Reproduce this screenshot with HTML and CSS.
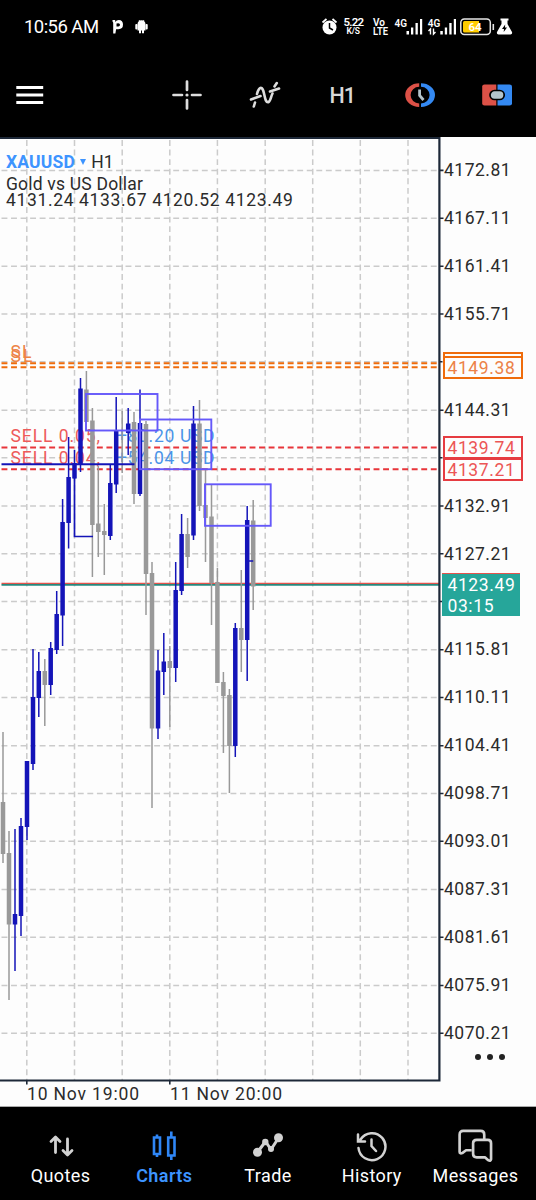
FILE: index.html
```html
<!DOCTYPE html>
<html lang="en">
<head>
<meta charset="utf-8">
<title>XAUUSD H1</title>
<link rel="stylesheet" href="styles.css">
</head>
<body>
<div class="app">
  <header class="status">
    <span class="clock">10:56 AM</span>
    <svg class="notif" width="37" height="16" viewBox="0 0 37 16" fill="#fff">
      <path d="M0.5 1H3.2V3Q4.5 1 6.8 1Q11 1.200 11 5.600Q11 10.200 6.500 10.200H4.100L3.400 14.500H1.200V4Q1.200 3 0.500 2.500ZM4.500 4.500V7.500H6.300Q8 7.400 8 5.800Q8 4.200 6.300 4.200Z" fill-rule="evenodd"/>
      <path d="M25.500 5.500Q25.500 1.500 29.500 1.300Q33.500 1.500 33.500 5.500V11.500H25.500ZM27 11H29V14.300H27ZM30 11H32V14.300H30Z"/>
      <rect x="23.300" y="5" width="2.200" height="5.500" rx="0.900"/><rect x="33.500" y="5" width="2.200" height="5.500" rx="0.900"/>
      <path d="M27 1L28 2.500M32 1L31 2.500" stroke="#fff" stroke-width="0.800"/>
    </svg>
    <svg class="system" width="196" height="24" viewBox="320 15 196 24">
      <g fill="#fff">
        <circle cx="329.500" cy="27.500" r="7"/>
        <path d="M322.500 22.500L326.500 19M336.500 22.500L332.500 19" stroke="#fff" stroke-width="1.800"/>
        <path d="M329.500 23V28L333 30" fill="none" stroke="#000" stroke-width="1.500"/>
        <text x="343.500" y="25.500" class="s11" textLength="20.500">5.22</text>
        <text x="346.500" y="34" class="s8" textLength="13.500">K/S</text>
        <text x="373" y="26" class="s10" textLength="12">Vo</text>
        <text x="373" y="34.700" class="s10" textLength="15" lengthAdjust="spacingAndGlyphs">LTE</text>
        <text x="394.500" y="26.800" class="s10" textLength="12.500">4G</text>
        <text x="427.800" y="26.500" class="s10" textLength="12.500">4G</text>
        <path d="M406.500 31H409V34.500H406.500ZM411 27.500H413.300V34.500H411ZM415.500 23H417.800V34.500H415.500ZM420 19H422.200V34.500H420Z"/>
        <path d="M440.300 31H442.800V34.500H440.300ZM444.800 27.500H447.100V34.500H444.800ZM449.300 23H451.600V34.500H449.300ZM453.800 19H456V34.500H453.800Z"/>
        <path d="M430.500 34.500V29L428.500 31M433.500 28.500V34L435.500 32" fill="none" stroke="#fff" stroke-width="1.400"/>
        <rect x="460.800" y="19" width="29.500" height="15.500" rx="3.500" fill="none" stroke="#e6e6e6" stroke-width="1.500"/>
        <path d="M464.500 21H479V32.500H464.500Q463 32.500 463 31V22.500Q463 21 464.500 21Z" fill="#fc0"/>
        <path d="M493.300 24V30" stroke="#e6e6e6" stroke-width="1.600"/>
        <text x="468.500" y="31" class="s11" textLength="13">64</text>
        <path d="M500.500 18.500H508.500V20.500H507.500V24L512 32Q512.600 34.300 510.500 34.500H498.500Q496.400 34.300 497 32L501.500 24V20.500H500.500Z"/>
        <path d="M505.200 24.500L502 29H504L503.700 32L507 27.500H505Z" fill="#000"/>
      </g>
    </svg>
  </header>

  <nav class="toolbar">
    <svg class="menu" width="28" height="20" viewBox="0 0 28 20"><path d="M0.300 2.500H27.200M0.300 10H27.200M0.300 17.500H27.200" stroke="#fff" stroke-width="3"/></svg>
    <div class="tools">
      <svg width="30" height="30" viewBox="0 0 30 30"><path d="M15 1.500V10M15 20V28.500M1.500 15H10M20 15H28.500" stroke="#ddd" stroke-width="2.700" stroke-linecap="round"/><circle cx="15" cy="15" r="1.600" fill="#ddd"/></svg>
      <svg width="34" height="30" viewBox="0 0 34 30" fill="none" stroke="#ddd" stroke-width="2.600" stroke-linecap="round"><path d="M3 19.500L12.500 16M22 11.500L31 8.500M5.800 26.500L7 22.500M9 14C10.500 7.500 13.500 5.800 15.200 10.500C17 16 17 22.500 20.200 22.200C22.500 21.500 22.700 17 24.500 13.500M26.500 6.500L28.800 3"/></svg>
      <span class="period">H1</span>
      <svg width="30" height="28" viewBox="0 0 30 28"><path d="M14.200 2.200V5.800A8.600 8.300 0 0 0 14.200 22.400V26A14 11.900 0 0 1 14.200 2.200Z" fill="#dc5147"/><path d="M16 2.200V5.800A8.600 8.300 0 0 1 16 22.400V26A14 11.900 0 0 0 16 2.200Z" fill="#3489f2"/><path d="M14.600 8.500V14.500L18.500 19" fill="none" stroke="#b4c4cb" stroke-width="2.800"/></svg>
      <svg width="30" height="22" viewBox="0 0 30 22"><path d="M2.500 0.500H14.300V21.500H2.500Q0.200 21.500 0.200 19.500V2.500Q0.200 0.500 2.500 0.500Z" fill="#dc5147"/><path d="M15.500 0.500H27.500Q30 0.500 30 2.500V19.500Q30 21.500 27.500 21.500H15.500Z" fill="#3489f2"/><rect x="8" y="6.500" width="14.200" height="9" rx="4.500" fill="#b4c4cb" stroke="#000" stroke-width="1.700"/></svg>
    </div>
  </nav>

  <main class="chart">
    <svg class="plot" width="444" height="970" viewBox="0 137 444 970">
      <g class="grid">
        <path stroke-dasharray="5.900 3.640" d="M1.500 170.400H438M1.500 218.200H438M1.500 266.200H438M1.500 314H438M1.500 361.800H438M1.500 410.200H438M1.500 457.800H438M1.500 506H438M1.500 553.800H438M1.500 601.500H438M1.500 649.700H438M1.500 697.500H438M1.500 745.700H438M1.500 793.500H438M1.500 841.200H438M1.500 889.500H438M1.500 937.200H438M1.500 985.500H438M1.500 1033.300H438"/>
        <path stroke-dasharray="5.900 3.680" d="M26.800 140V1080M74.500 140V1080M122.200 140V1080M169.800 140V1080M217.400 140V1080M265.200 140V1080M312.700 140V1080M360.300 140V1080M408 140V1080"/>
      </g>
      <path d="M1.500 583.500H439" stroke="#e5534d" stroke-width="1.400"/>
      <path d="M1.500 584.900H439" stroke="#26897f" stroke-width="1.600"/>
      <g class="sl"><text x="10.500" y="357.500" textLength="21">SL</text><text x="10.500" y="361.500" textLength="22">SL</text></g>
      <path d="M1.500 363.300H438M1.500 367.300H438" stroke="#ef6c0c" stroke-width="2" stroke-dasharray="5.900 3.640"/>
      <path d="M1.500 447.500H438M1.500 469.200H438" stroke="#e8353a" stroke-width="1.900" stroke-dasharray="5.900 3.640"/>
      <g class="order">
        <text x="10.500" y="442" textLength="89.500">SELL 0.05,</text>
        <text x="10.500" y="463.500" textLength="89.500">SELL 0.04,</text>
        <g class="profit"><text x="117" y="442" textLength="97.500">+80.20 USD</text><text x="117" y="463.500" textLength="97.500">+54.04 USD</text></g>
      </g>
      <g class="down">
        <path class="wick" d="M3 732V863M9 831V1000M44.800 659V726M86.400 371V422M92.400 408V577M98.300 466V557M104.300 504V575M122.200 411V473M134 412V504M146 421V615M152 562V808M169.800 646V727M187.600 518V568M199.500 400V511M205.500 470V562M211.500 485V625M217.400 568V683M223.400 672V753M229.400 689V793M241.300 570V672M253.200 500V610"/>
        <path class="body" d="M3 802V854M9 853V924.500M44.800 671V685M86.400 389.500V422M92.400 420.500V525M98.300 523.500V532M104.300 531V535M134 422V494M146 424V574M152 573V728.500M169.800 661V668M187.600 534V557M199.500 423.500V506M205.500 505V518M211.500 516.500V583M217.400 582V683M223.400 682V696M229.400 695V746M241.300 628V640M253.200 520.500V586.500"/>
      </g>
      <g class="up">
        <path class="wick" d="M15 829V971M21 818V936M27 761V840M33 649V770M38.800 652V717M50.700 642V695M56.700 591V654M62.600 499V646M68.600 437V548.500M74.500 450V479M80.500 378V472M110.300 465V540M116.200 397V493M128.200 408V455M140 389.500V496M158 650V739M163.800 633V695M175.700 562V682M181.600 514V595M193.500 406V540M235.300 623V757M247.200 506V681"/>
        <path class="body" d="M15 914V924.500M21 826V916M27 761V827M33 697V764M38.800 671V698M50.700 648V685M56.700 614V650M62.600 522V615.500M68.600 477V523M74.500 463V478.500M80.500 388.500V464M110.300 483V536M116.200 431V484.500M128.200 423.500V433M140 423V494M158 670.500V728.500M163.800 661.500V672M175.700 590V668M181.600 534V591M193.500 423.500V535.500M235.300 628V746M247.200 520V640"/>
        <path d="M74.500 464V536.500H93M247 561H253.200" fill="none" stroke-width="1.700"/>
        <path d="M1.500 464.200H134.500" stroke-width="2"/>
      </g>
      <g class="zones"><rect x="86" y="394" width="71.500" height="36.500"/><rect x="140" y="419.500" width="71.300" height="49.700"/><rect x="205" y="484.300" width="65.700" height="41.500"/></g>
      <g class="frame">
        <path d="M0 138H439.400V1080.500H0" stroke-width="2.200"/>
        <path stroke-width="1.600" d="M440 170.400H443.500M440 218.200H443.500M440 266.200H443.500M440 314H443.500M440 361.800H442.500M440 410.200H443.500M440 457.800H442.500M440 506H443.500M440 553.800H443.500M440 601.500H442.500M440 649.700H443.500M440 697.500H443.500M440 745.700H443.500M440 793.500H443.500M440 841.200H443.500M440 889.500H443.500M440 937.200H443.500M440 985.500H443.500M440 1033.300H443.500M26.800 1081V1084.500M169.800 1081V1084.500"/>
      </g>
      <g class="time"><text x="27" y="1100" textLength="112">10 Nov 19:00</text><text x="170" y="1100" textLength="112">11 Nov 20:00</text></g>
    </svg>
    <div class="prices">
      <span>4172.81</span><span>4167.11</span><span>4161.41</span><span>4155.71</span><span></span><span>4144.31</span><span></span><span>4132.91</span><span>4127.21</span><span></span><span>4115.81</span><span>4110.11</span><span>4104.41</span><span>4098.71</span><span>4093.01</span><span>4087.31</span><span>4081.61</span><span>4075.91</span><span>4070.21</span>
    </div>
    <div class="tag stop back"></div>
    <div class="tag stop">4149.38</div>
    <div class="tag sell first">4139.74</div>
    <div class="tag sell second">4137.21</div>
    <div class="tag now">4123.49<br>03:15</div>
    <div class="heading">
      <div class="symbol"><b>XAUUSD</b><i></i><span>H1</span></div>
      <div class="name">Gold vs US Dollar</div>
      <div class="ohlc">4131.24 4133.67 4120.52 4123.49</div>
    </div>
    <svg class="more" width="32" height="8" viewBox="0 0 32 8" fill="#222"><circle cx="4" cy="4" r="3"/><circle cx="16" cy="4" r="3"/><circle cx="28" cy="4" r="3"/></svg>
  </main>

  <nav class="tabs">
    <a class="tab"><svg width="26" height="34" viewBox="0 0 26 34" fill="none" stroke="#d2d2d2" stroke-width="2.800" stroke-linecap="round" stroke-linejoin="round"><path d="M7.500 23.500V8.500M3 12.500L7.500 8L12 12.500M19.500 10V25M15 21.500L19.500 26L24 21.500"/></svg><span>Quotes</span></a>
    <a class="tab active"><svg width="26" height="34" viewBox="0 0 26 34" fill="none" stroke="#2f86f6" stroke-width="2.600"><path d="M3 8.500H9V25H3ZM6 5.500V8.500M6 25V28M17.200 8.500H23.500V26.500H17.200ZM20.300 2.500V8.500M20.300 26.500V31"/></svg><span>Charts</span></a>
    <a class="tab"><svg width="32" height="34" viewBox="0 0 32 34" fill="#d2d2d2"><path d="M6 22.500L13.500 12.500L19 20.500L26.500 9" fill="none" stroke="#d2d2d2" stroke-width="3" stroke-linejoin="round"/><circle cx="5.500" cy="23.300" r="4.500"/><circle cx="13.300" cy="13" r="3.200"/><circle cx="19" cy="20" r="3"/><circle cx="26.500" cy="8.800" r="4.500"/></svg><span>Trade</span></a>
    <a class="tab"><svg width="32" height="34" viewBox="0 0 32 34" fill="none" stroke="#d2d2d2" stroke-width="2.500" stroke-linecap="round"><path d="M2.500 19A13.500 13.500 0 1 0 4.500 10.500M2 5.500V12.500H9M15.500 10.500V17L20 22"/></svg><span>History</span></a>
    <a class="tab"><svg width="38" height="36" viewBox="0 0 38 36" fill="none" stroke="#d2d2d2" stroke-width="2.800" stroke-linejoin="round"><path d="M15.500 22.500H9.500L5.500 25.500Q2.700 26.500 2.700 24V6Q2.700 2 6.500 2H25Q28.800 2 28.800 6V11.500"/><path d="M20.800 11.500H32.500Q36 11.500 36 15V32Q35.500 34.500 33 33L29.500 30H20.800Q17 30 17 26.500V15Q17 11.500 20.800 11.500Z"/></svg><span>Messages</span></a>
  </nav>
</div>
</body>
</html>
```

FILE: styles.css
```css
* { box-sizing: border-box; }
body { margin: 0; background: #000; font-family: Roboto, "Liberation Sans", sans-serif; }
.app { display: flex; flex-direction: column; width: 536px; height: 1200px; overflow: hidden; background: #000; }
svg { display: block; flex: none; }

.status { display: flex; align-items: center; height: 54px; padding: 0 20px 0 24px; color: #fff; }
.clock { width: 87.500px; font-size: 18.500px; line-height: 20px; letter-spacing: -0.550px; white-space: nowrap; }
.system { margin-left: auto; }
.system text { font-weight: 600; }
.s11 { font-size: 11.500px; }
.s10 { font-size: 10px; }
.s8 { font-size: 8.500px; }

.toolbar { display: flex; align-items: center; height: 83px; padding: 0 0 1px 16px; }
.tools { display: grid; grid-template-columns: repeat(5, 77.500px); align-items: center; justify-items: center; margin-left: auto; }
.period { color: #d8d8d8; font-size: 21.500px; font-weight: 500; letter-spacing: -1px; }

.chart { position: relative; display: flex; height: 970px; background: #fdfdfd; border-bottom: 1px solid #aaa; }
.grid path { fill: none; stroke: #cbcbcb; stroke-width: 1.500; }
.plot text { font-size: 17.500px; }
.sl text { fill: #ed8346; }
.order text { fill: #ee5a5a; }
.order .profit text { fill: #4a94e8; }
.down { stroke: #999; }
.up { stroke: #1414b8; }
.wick { stroke-width: 1.500; }
.body { stroke-width: 4.500; }
.zones rect { fill: none; stroke: #6558fa; stroke-width: 1.900; }
.frame path { fill: none; stroke: #1d2838; }
.plot .time text { fill: #2b2b2b; font-size: 17.500px; }

.prices { display: flex; flex-direction: column; padding-top: 9px; }
.prices span { height: 47.940px; line-height: 48px; color: #2b2b2b; font-size: 17.500px; letter-spacing: 0.500px; }

.tag { position: absolute; left: 443px; width: 80px; height: 23px; padding-left: 2.500px; border: 2px solid; background: #fdfdfd; font-size: 17.500px; line-height: 21px; letter-spacing: 0.600px; white-space: nowrap; }
.stop { top: 219px; color: #ec8248; border-color: #ef6c0c; }
.stop.back { top: 215px; }
.sell { color: #ec5656; border-color: #e63c41; }
.sell.first { top: 299px; }
.sell.second { top: 321px; }
.tag.now { top: 436px; left: 442px; width: 78px; height: 43px; padding: 1px 0 0 5.500px; border: 0; border-top: 1px solid #e5534d; background: #26a69a; color: #fff; line-height: 21px; }

.heading { position: absolute; left: 6px; top: 14px; color: #2b2b2b; font-size: 17.500px; white-space: nowrap; }
.symbol { display: flex; align-items: center; height: 22px; }
.symbol b { color: #3d94ff; font-weight: 700; letter-spacing: 0.200px; }
.symbol i { margin: 0 5px 0 5px; border: 3.200px solid transparent; border-top: 6px solid #3d94ff; border-bottom: 0; }
.name { height: 16px; line-height: 22px; font-size: 17.500px; letter-spacing: 0.200px; }
.ohlc { line-height: 22px; letter-spacing: 0.640px; }
.more { position: absolute; left: 474px; top: 916px; }

.tabs { display: grid; grid-template-columns: repeat(5, 1fr); height: 93px; padding: 0 8.700px; }
.tab { display: flex; flex-direction: column; align-items: center; padding-top: 22px; color: #fff; }
.tab svg { height: 34px; }
.tab span { margin-top: 2px; font-size: 18px; line-height: 22px; letter-spacing: 0.400px; }
.tab.active span { color: #3d94ff; font-weight: 600; }
```
